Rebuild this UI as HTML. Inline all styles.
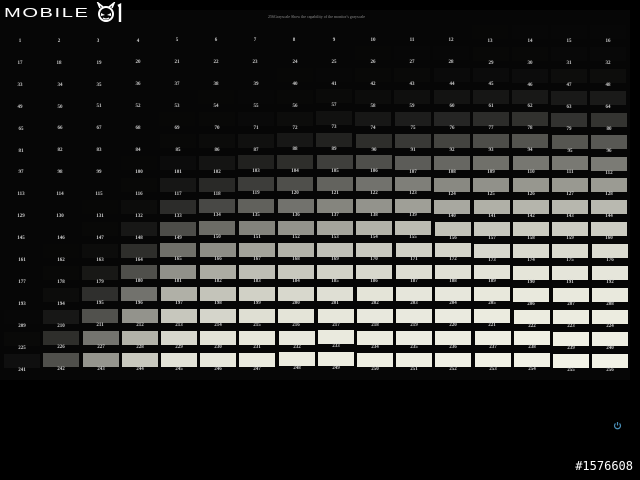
<!DOCTYPE html>
<html><head><meta charset="utf-8"><style>
html,body{margin:0;padding:0;background:#000;width:640px;height:480px;overflow:hidden;position:relative;font-family:"Liberation Sans",sans-serif}
#scr{position:absolute;left:0;top:10px;width:630px;height:370px;background:#060606}
.c{position:absolute;width:36px;height:14px}
.l{position:absolute;width:36px;text-align:center;font:bold 5px "Liberation Serif",serif;color:#d0d0d0;line-height:6px}
#logo{position:absolute;left:4px;top:5px;color:#fff;font:13px "Liberation Sans",sans-serif;letter-spacing:1px;transform:scaleX(1.55);transform-origin:left top}
#wm{position:absolute;right:7px;bottom:7px;color:#fff;font:12px "DejaVu Sans Mono","Liberation Mono",monospace}
#title{position:absolute;left:268px;top:14px;color:#8a8a8a;font:4px "Liberation Serif",serif;white-space:nowrap}
</style></head><body>
<div id="scr"></div>
<div id="grid"></div>
<div id="logo">MOBILE</div>
<svg style="position:absolute;left:96px;top:2px" width="28" height="22" viewBox="0 0 28 22">
<circle cx="10" cy="12" r="7" fill="none" stroke="#fff" stroke-width="2"/>
<path d="M4 6 L2 1 L7 5 M16 6 L18 1 L13 5" stroke="#fff" stroke-width="1.6" fill="none"/>
<path d="M5 11 L9 13 L5 14 Z M15 11 L11 13 L15 14 Z" fill="#fff"/>
<path d="M7 16 Q10 18 13 16" stroke="#fff" stroke-width="1.2" fill="none"/>
<path d="M22 4 L24 3 L24 20" stroke="#fff" stroke-width="2.4" fill="none"/>
</svg>
<div id="title">256Grayscale Show the capability of the monitor's grayscale</div>
<svg style="position:absolute;left:613px;top:421px" width="9" height="9" viewBox="0 0 9 9"><path d="M2.5 2.5 A3 3 0 1 0 6.5 2.5" stroke="#4a8fb8" stroke-width="1.2" fill="none"/><path d="M4.5 1 V4.5" stroke="#4a8fb8" stroke-width="1.2"/></svg>
<div id="wm">#1576608</div>
<script>
var pts=[[0,6],[32,8],[48,13],[64,26],[80,52],[96,88],[112,123],[128,155],[144,185],[160,205],[176,220],[192,230],[256,242]];
function f(n){if(n<=0)return 6;for(var i=1;i<pts.length;i++){if(n<=pts[i][0]){var a=pts[i-1],b=pts[i];return a[1]+(b[1]-a[1])*(n-a[0])/(b[0]-a[0]);}}return 242;}
var d=[190,150,118,88,58,45,35,28,20,14,9,5,2,0,0,0];
var h='';
for(var r=0;r<16;r++){for(var c=0;c<16;c++){
var n=r*16+c+1;var v=f(n-d[c]);
var x=Math.round(2+39.2*c+r*0.15);var ly=Math.round(42+21.9*r-c*0.15+(c>8?(c-8)*0.35:0));
var R=Math.round(v),G=Math.round(v),B=Math.round(v*0.95);
h+='<div class="c" style="left:'+x+'px;top:'+(ly-17)+'px;background:rgb('+R+','+G+','+B+')"></div>';
h+='<div class="l" style="left:'+x+'px;top:'+(ly-3)+'px">'+n+'</div>';
}}
document.getElementById('grid').innerHTML=h;
</script>
</body></html>
